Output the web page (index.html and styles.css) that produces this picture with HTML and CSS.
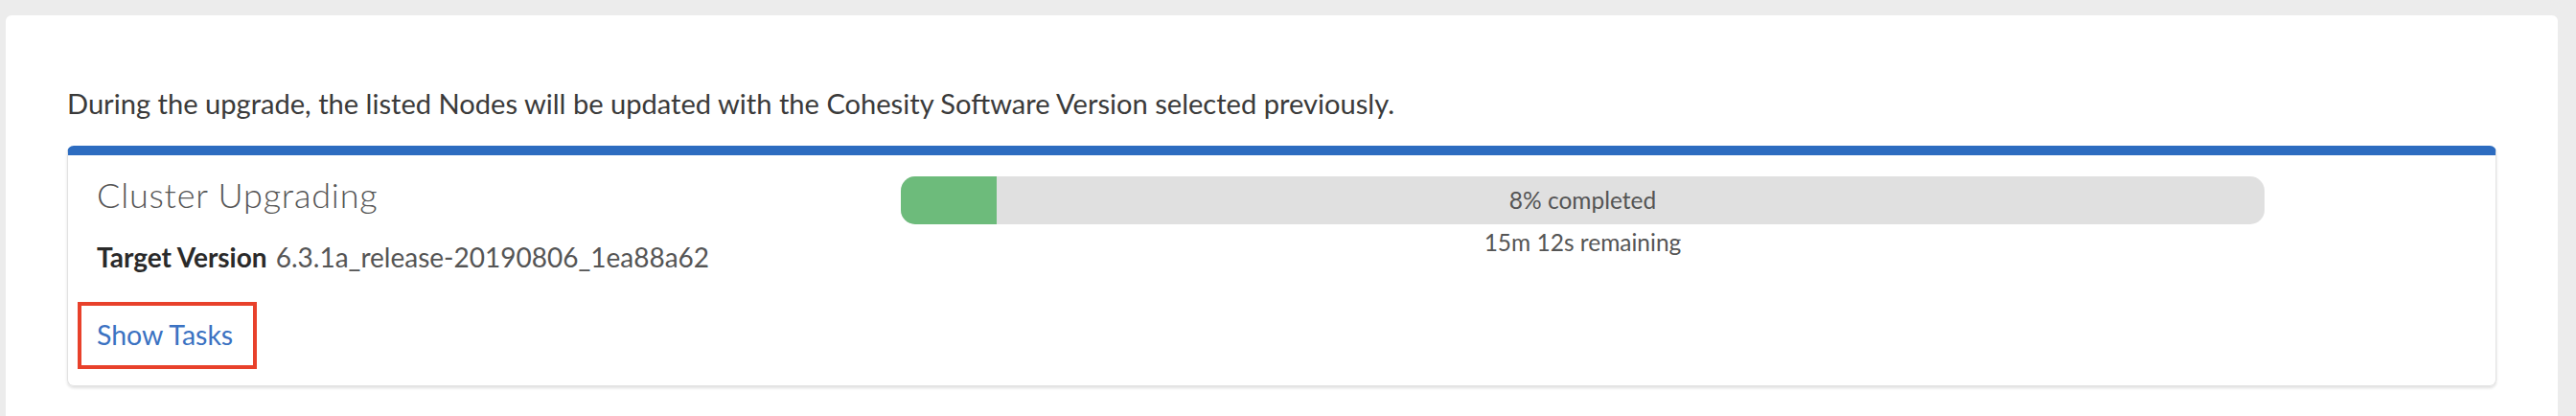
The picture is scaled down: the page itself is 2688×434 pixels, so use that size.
FILE: index.html
```html
<!DOCTYPE html>
<html lang="en">
<head>
    <meta charset="UTF-8">
    <meta name="viewport" content="width=device-width, initial-scale=1.0">
    <title>Cluster Upgrade</title>
    <link rel="stylesheet" href="styles.css">
</head>
<body>

    <div class="panel">
        <p class="intro">During the upgrade, the listed Nodes will be updated with the Cohesity Software Version selected previously.</p>

        <!-- Upgrade status card -->
        <div class="upgrade-card">
            <div class="upgrade-info">
                <h3 class="upgrade-title">Cluster Upgrading</h3>
                <div class="target-version">
                    <span class="label">Target Version</span>
                    <span class="value">6.3.1a_release-20190806_1ea88a62</span>
                </div>
                <a href="#" class="show-tasks">Show Tasks</a>
            </div>

            <div class="upgrade-progress">
                <div class="progress-bar">
                    <div class="progress-fill" style="width: 7%"></div>
                    <span class="progress-text">8% completed</span>
                </div>
                <div class="remaining">15m 12s remaining</div>
            </div>
        </div>
    </div>

</body>
</html>
```

FILE: styles.css
```css
body {
    font-family: Lato, "Open Sans", sans-serif;
    margin: 0;
    padding: 16px 19px 0 6px;
    background-color: #ececec;
    color: #333;
}

.panel {
    background: white;
    border-radius: 6px 6px 0 0;
    padding: 75px 64px 31px;
}

.intro {
    margin: 0 0 26px;
    font-size: 29.1px;
    line-height: 1.2;
    color: #3a3a3a;
}

/* Upgrade card */
.upgrade-card {
    display: grid;
    grid-template-columns: 839px 1423px;
    align-items: start;
    border: 1px solid #e2e2e2;
    border-top: 10px solid #2d6cc0;
    border-radius: 7px;
    box-shadow: 0 2px 3px rgba(0, 0, 0, 0.12);
    padding: 20px 30px 36px;
}

.upgrade-title {
    margin: 0;
    font-size: 36px;
    font-weight: 300;
    letter-spacing: 0.8px;
    line-height: 1.2;
    color: #555;
}

.target-version {
    margin-top: 27px;
    font-size: 28px;
    line-height: 1.2;
    color: #555;
}

.target-version .label {
    color: #2a2a2a;
    font-weight: 700;
    margin-right: 2px;
}

.show-tasks {
    position: relative;
    display: inline-block;
    margin-top: 46px;
    font-size: 28.5px;
    line-height: 1.2;
    color: #3b72c2;
    text-decoration: none;
}

/* highlight box drawn over the link */
.show-tasks::after {
    content: "";
    position: absolute;
    top: -17px;
    left: -20px;
    right: -25px;
    bottom: -19px;
    border: 4px solid #e8412b;
}

/* Progress */
.upgrade-progress {
    margin-top: 2px;
    text-align: center;
    color: #555;
    font-size: 24.5px;
}

.progress-bar {
    position: relative;
    height: 50px;
    background-color: #e0e0e0;
    border-radius: 15px;
    overflow: hidden;
}

.progress-fill {
    height: 100%;
    background-color: #6dbb7b;
}

.progress-text {
    position: absolute;
    left: 0;
    right: 0;
    top: 0;
    line-height: 50px;
}

.remaining {
    margin-top: 4px;
    line-height: 1.2;
}
```
